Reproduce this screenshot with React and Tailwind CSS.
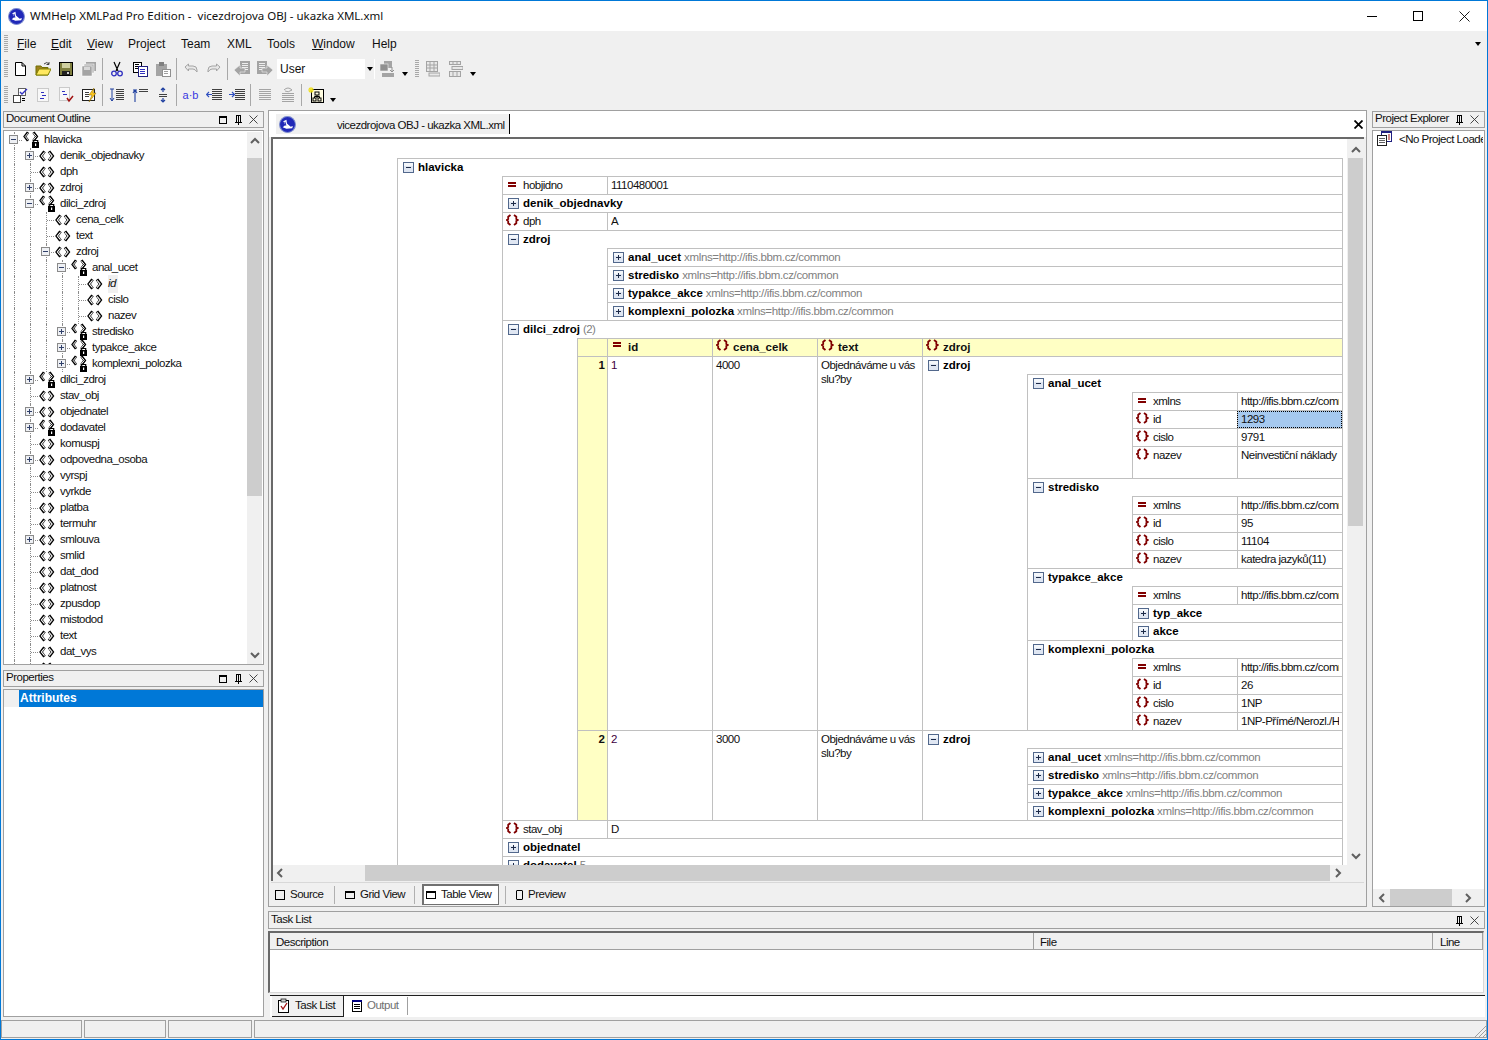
import React from "react";

const Svg = ({ children, w = 16, h = 16, crisp = false }) => (
  <svg width={w} height={h} viewBox={`0 0 ${w} ${h}`} shapeRendering={crisp ? "crispEdges" : undefined} className="shrink-0 block">
    {children}
  </svg>
);

const Logo = () => (
  <svg width="17" height="17" viewBox="0 0 16 16" className="shrink-0 block">
    <circle cx="8" cy="8" r="7.5" fill="#2028b8" stroke="#8090d0" strokeWidth="1" />
    <path d="M4 5 L7 3.5 L7.5 7 L11 10 L13 9.5 L12.5 11.5 L7 12 L3.5 10.5 L6 8.5 Z" fill="#fff" />
    <path d="M5.5 5.5 L6.5 9" stroke="#2028b8" strokeWidth="1" />
  </svg>
);

// dark red marks used in the table view
const Brace = () => (
  <Svg w={13} h={13}>
    <path d="M4.5 2 L2.2 3.8 L2.2 6 L0.8 7 L2.2 8 L2.2 10.2 L4.5 12" fill="none" stroke="#800000" strokeWidth="1.8" />
    <path d="M8 2 L10.3 3.8 L10.3 6 L11.7 7 L10.3 8 L10.3 10.2 L8 12" fill="none" stroke="#800000" strokeWidth="1.8" />
  </Svg>
);
const Equal = () => (
  <Svg w={13} h={13} crisp>
    <rect x="2" y="5" width="8" height="2" fill="#800000" />
    <rect x="2" y="8" width="8" height="2" fill="#800000" />
  </Svg>
);

const Expander = ({ open }) => (
  <svg width="11" height="11" viewBox="0 0 11 11" shapeRendering="crispEdges" className="shrink-0 block">
    <rect x="0.5" y="0.5" width="10" height="10" fill="#dfe6f2" stroke="#52688c" />
    <rect x="1" y="1" width="9" height="3" fill="#f4f7fb" />
    <rect x="3" y="5" width="5" height="1" fill="#1c2a48" />
    {!open && <rect x="5" y="3" width="1" height="5" fill="#1c2a48" />}
  </svg>
);

const Chev = ({ x, flip, y = 0, s = 11 }) => (
  <g transform={`translate(${x} ${y}) ${flip ? "translate(6.5 0) scale(-1 1)" : ""} scale(${s / 11})`}>
    <path d="M5 0.8 L1.5 5.5 L5 10.2" fill="none" stroke="#000" strokeWidth="3" />
    <path d="M5 1.8 L1.9 5.5 L5 9.2" fill="none" stroke="#fff" strokeWidth="1.1" />
  </g>
);

const TagIcon = ({ lock }) => (
  <svg width="18" height="18" viewBox="0 0 18 18" className="shrink-0 block -mt-[1px]">
    {lock ? (
      <>
        <Chev x={0.5} y={0.5} s={10} />
        <Chev x={8.5} y={0.5} s={10} flip />
        <rect x="9" y="11" width="7" height="6" fill="#000" />
        <path d="M10.3 11 V9.5 H14.7 V11" fill="none" stroke="#000" strokeWidth="1.2" />
        <rect x="12" y="12.5" width="1.2" height="2.5" fill="#fff" />
      </>
    ) : (
      <>
        <Chev x={0.5} y={3.5} />
        <Chev x={8.5} y={3.5} flip />
      </>
    )}
  </svg>
);

const TreeBox = ({ open }) => (
  <svg width="9" height="9" viewBox="0 0 9 9" shapeRendering="crispEdges" className="block bg-white">
    <rect x="0.5" y="0.5" width="8" height="8" fill="#eef0f4" stroke="#8a8a8a" />
    <rect x="2" y="4" width="5" height="1" fill="#30406a" />
    {!open && <rect x="4" y="2" width="1" height="5" fill="#30406a" />}
  </svg>
);

const Guide = () => (
  <div className="w-[16px] h-full shrink-0 pl-[8px]">
    <div className="h-full border-l border-dotted border-[#8c8c8c]" />
  </div>
);

const TreeRow = ({ d, name, exp, lock, em }) => (
  <div className="flex h-[16px] items-center">
    {Array.from({ length: d }).map((_, i) => (
      <Guide key={i} />
    ))}
    <div className="relative w-[16px] h-full shrink-0 pl-[8px] flex items-center">
      <div className="h-full border-l border-dotted border-[#8c8c8c]" />
      <div className="w-[8px] border-t border-dotted border-[#8c8c8c]" />
      {exp && (
        <div className="absolute left-[3px] top-[3px]">
          <TreeBox open={exp === "-"} />
        </div>
      )}
    </div>
    <div className="w-[22px] shrink-0 pl-[1px]">
      <TagIcon lock={lock} />
    </div>
    <span className={em ? "italic bg-[#f0f0f0] pr-[2px]" : ""}>{name}</span>
  </div>
);

const treeRows = [
  [0, "hlavicka", "-", 1],
  [1, "denik_objednavky", "+"],
  [1, "dph"],
  [1, "zdroj", "+"],
  [1, "dilci_zdroj", "-", 1],
  [2, "cena_celk"],
  [2, "text"],
  [2, "zdroj", "-"],
  [3, "anal_ucet", "-", 1],
  [4, "id", null, 0, 1],
  [4, "cislo"],
  [4, "nazev"],
  [3, "stredisko", "+", 1],
  [3, "typakce_akce", "+", 1],
  [3, "komplexni_polozka", "+", 1],
  [1, "dilci_zdroj", "+", 1],
  [1, "stav_obj"],
  [1, "objednatel", "+"],
  [1, "dodavatel", "+", 1],
  [1, "komuspj"],
  [1, "odpovedna_osoba", "+"],
  [1, "vyrspj"],
  [1, "vyrkde"],
  [1, "platba"],
  [1, "termuhr"],
  [1, "smlouva", "+"],
  [1, "smlid"],
  [1, "dat_dod"],
  [1, "platnost"],
  [1, "zpusdop"],
  [1, "mistodod"],
  [1, "text"],
  [1, "dat_vys"],
  [1, ""],
];

const ChevIcon = ({ dir }) => {
  const d = {
    up: "M2 8 L6 4 L10 8",
    down: "M2 4 L6 8 L10 4",
    left: "M8 2 L4 6 L8 10",
    right: "M4 2 L8 6 L4 10",
  }[dir];
  return (
    <svg width="12" height="12" viewBox="0 0 12 12" className="block">
      <path d={d} fill="none" stroke="#606060" strokeWidth="2" />
    </svg>
  );
};

const BoxBtn = () => <div className="w-[8px] h-[8px] border border-black border-t-2" />;
const Pin = () => (
  <svg width="9" height="11" viewBox="0 0 9 11" shapeRendering="crispEdges" className="block">
    <path d="M1 8 H8 M2.5 1 H6.5 V8 H2.5 Z M4 1 V8" fill="none" stroke="#000" />
    <path d="M4.5 8 V11" stroke="#000" />
  </svg>
);
const Cross = ({ bold }) => (
  <svg width="9" height="9" viewBox="0 0 9 9" className="block">
    <path d="M0.5 0.5 L8.5 8.5 M8.5 0.5 L0.5 8.5" stroke={bold ? "#000" : "#333"} strokeWidth={bold ? 1.8 : 0.9} />
  </svg>
);

const PanelHead = ({ title, box, className = "" }) => (
  <div className={`flex h-[17px] items-center border border-[#a0a0a0] bg-[#f0f0f0] pl-[2px] pr-[5px] ${className}`}>
    <span className="flex-1 whitespace-nowrap overflow-hidden pb-[1px]">{title}</span>
    {box && <div className="mr-[7px]"><BoxBtn /></div>}
    <div className="mr-[6px]"><Pin /></div>
    <Cross />
  </div>
);

// table view ----------------------------------------------------------
const Head = ({ name, open, meta, count, className = "" }) => (
  <div className={`flex h-[17px] items-center pl-[5px] whitespace-nowrap ${className}`}>
    <Expander open={open} />
    <span className="ml-[4px] font-bold text-black tracking-normal">{name}</span>
    {meta && <span className="ml-[3px] text-[#808080] tracking-[-0.35px]">{meta}</span>}
    {count && <span className="ml-[3px] text-[#808080]">{count}</span>}
  </div>
);

const Block = ({ name, open, meta, count, children }) => (
  <div className="border-t border-l border-[#c0c0c0]">
    <Head name={name} open={open} meta={meta} count={count} />
    {children && <div className="ml-[104px]">{children}</div>}
  </div>
);

const Field = ({ kind, name, value, sel, h = "h-[18px]" }) => (
  <div className={`flex border-t border-l border-[#c0c0c0] ${h}`}>
    <div className="flex w-[104px] shrink-0 pl-[3px]">
      <div className="w-[17px] shrink-0">{kind === "a" ? <Equal /> : <Brace />}</div>
      <span className="leading-[16px] whitespace-nowrap">{name}</span>
    </div>
    <div className={`flex-1 min-w-0 border-l border-[#c0c0c0] ${sel ? "bg-[#a6c9ef] outline-1 outline-dotted -outline-offset-1 outline-black" : ""} pl-[3px] pr-[3px]`}>
      <div className="overflow-hidden whitespace-nowrap leading-[16px]">{value}</div>
    </div>
  </div>
);

const URL = "http://ifis.bbm.cz/common";
const NS = "xmlns=http://ifis.bbm.cz/common";

const Col = ({ children, className = "" }) => (
  <div className={`w-[105px] shrink-0 border-l border-[#c0c0c0] pl-[3px] pt-[1px] leading-[14px] ${className}`}>{children}</div>
);

const ColHead = ({ kind, children, className = "" }) => (
  <div className={`flex shrink-0 border-l border-[#c0c0c0] pl-[3px] font-bold tracking-normal items-start ${className}`}>
    <div className="w-[17px] shrink-0">
      {kind === "a" ? <div className="-mt-[2px]"><Equal /></div> : <div className="-mt-[1px]"><Brace /></div>}
    </div>
    <span className="leading-[17px]">{children}</span>
  </div>
);

const NumCell = ({ n }) => (
  <div className="w-[30px] shrink-0 border-l border-[#c0c0c0] bg-[#ffffc4] text-right pr-[2px] font-bold tracking-normal leading-[16px]">{n}</div>
);

const TableView = () => (
  <div className="w-[946px] h-full overflow-hidden">
    <div className="border-r border-[#c0c0c0] text-[#101010]">
      <Block name="hlavicka" open>
        <Field kind="a" name="hobjidno" value="1110480001" />
        <Block name="denik_objednavky" />
        <Field kind="e" name="dph" value="A" />
        <Block name="zdroj" open>
          <Block name="anal_ucet" meta={NS} />
          <Block name="stredisko" meta={NS} />
          <Block name="typakce_akce" meta={NS} />
          <Block name="komplexni_polozka" meta={NS} />
        </Block>
        <div className="border-t border-l border-[#c0c0c0]">
          <Head name="dilci_zdroj" open count="(2)" />
          <div className="ml-[74px]">
            <div className="flex h-[18px] border-t border-l border-[#c0c0c0] bg-[#ffffc4]">
              <div className="w-[29px] shrink-0" />
              <ColHead kind="a" className="w-[105px]">id</ColHead>
              <ColHead kind="e" className="w-[105px]">cena_celk</ColHead>
              <ColHead kind="e" className="w-[105px]">text</ColHead>
              <ColHead kind="e" className="flex-1">zdroj</ColHead>
            </div>
            <div className="flex h-[374px] border-t border-[#c0c0c0]">
              <NumCell n="1" />
              <Col className="text-[#400040]">1</Col>
              <Col>4000</Col>
              <Col>Objednáváme u vás slu?by</Col>
              <div className="flex-1 min-w-0 border-l border-[#c0c0c0]">
                <Head name="zdroj" open />
                <div className="ml-[104px]">
                  <Block name="anal_ucet" open>
                    <Field kind="a" name="xmlns" value={URL} />
                    <Field kind="e" name="id" value="1293" sel />
                    <Field kind="e" name="cislo" value="9791" />
                    <Field kind="e" name="nazev" value="Neinvestiční náklady" h="h-[32px]" />
                  </Block>
                  <Block name="stredisko" open>
                    <Field kind="a" name="xmlns" value={URL} />
                    <Field kind="e" name="id" value="95" />
                    <Field kind="e" name="cislo" value="11104" />
                    <Field kind="e" name="nazev" value="katedra jazyků(11)" />
                  </Block>
                  <Block name="typakce_akce" open>
                    <Field kind="a" name="xmlns" value={URL} />
                    <Block name="typ_akce" />
                    <Block name="akce" />
                  </Block>
                  <Block name="komplexni_polozka" open>
                    <Field kind="a" name="xmlns" value={URL} />
                    <Field kind="e" name="id" value="26" />
                    <Field kind="e" name="cislo" value="1NP" />
                    <Field kind="e" name="nazev" value="1NP-Přímé/Nerozl./Hodnota" />
                  </Block>
                </div>
              </div>
            </div>
            <div className="flex h-[90px] border-t border-[#c0c0c0]">
              <NumCell n="2" />
              <Col className="text-[#400040]">2</Col>
              <Col>3000</Col>
              <Col>Objednáváme u vás slu?by</Col>
              <div className="flex-1 min-w-0 border-l border-[#c0c0c0]">
                <Head name="zdroj" open />
                <div className="ml-[104px]">
                  <Block name="anal_ucet" meta={NS} />
                  <Block name="stredisko" meta={NS} />
                  <Block name="typakce_akce" meta={NS} />
                  <Block name="komplexni_polozka" meta={NS} />
                </div>
              </div>
            </div>
          </div>
        </div>
        <Field kind="e" name="stav_obj" value="D" />
        <Block name="objednatel" />
        <Block name="dodavatel" meta="5" />
      </Block>
    </div>
  </div>
);

// toolbars ------------------------------------------------------------
const Lines = ({ x, y, n = 3, w = 7, c = "#000", gap = 2 }) =>
  Array.from({ length: n }).map((_, i) => <rect key={i} x={x} y={y + i * gap} width={w} height="1" fill={c} />);

const Page = ({ x = 2, y = 1, w = 11, h = 14, s = "#000", f = "#fff" }) => (
  <rect x={x + 0.5} y={y + 0.5} width={w} height={h} fill={f} stroke={s} />
);

const GR = "#a4a4a4";
const BL = "#3030c0";

const icons = {
  new: <path d="M3.5 1.5 H10 L13.5 5 V14.5 H3.5 Z M10 1.5 V5 H13.5" fill="#fff" stroke="#000" />,
  open: (
    <>
      <path d="M1 5 H6 L7 6.5 H13 V14 H1 Z" fill="#a08020" stroke="#707000" />
      <path d="M1 14 L4 8 H16 L13 14 Z" fill="#ffe860" stroke="#808000" />
      <path d="M9 3 Q12 0 14 3 M14 1 V3.5 H11.5" fill="none" stroke="#404040" />
    </>
  ),
  save: (
    <>
      <rect x="1.5" y="1.5" width="13" height="13" fill="#808040" stroke="#000" />
      <rect x="4" y="2" width="8" height="5" fill="#d0d0a0" />
      <rect x="4" y="10" width="8" height="4" fill="#202020" />
      <rect x="9" y="11" width="2" height="2" fill="#d0d0d0" />
    </>
  ),
  saveall: (
    <>
      <rect x="5" y="1" width="10" height="9" fill={GR} />
      <rect x="3" y="3" width="10" height="9" fill="#b8b8b8" stroke="#fff" strokeWidth="0.5" />
      <rect x="1" y="5" width="10" height="10" fill={GR} stroke="#fff" strokeWidth="0.5" />
      <rect x="3" y="6" width="6" height="3" fill="#d8d8d8" />
    </>
  ),
  cut: (
    <>
      <path d="M5 1 L9 10 M11 1 L7 10" stroke="#000" strokeWidth="1.2" />
      <circle cx="5" cy="12.5" r="2.3" fill="none" stroke={BL} strokeWidth="1.3" />
      <circle cx="11" cy="12.5" r="2.3" fill="none" stroke={BL} strokeWidth="1.3" />
    </>
  ),
  copy: (
    <>
      <Page x={1} y={1} w={8} h={10} />
      <Lines x={3} y={3} n={3} w={4} c="#000" />
      <Page x={6} y={5} w={9} h={10} s="#202080" />
      <Lines x={8} y={8} n={3} w={5} c={BL} />
    </>
  ),
  paste: (
    <>
      <rect x="1" y="3" width="11" height="12" fill={GR} />
      <rect x="4" y="1" width="5" height="4" fill="#808080" />
      <Page x={7} y={8} w={8} h={7} s="#909090" />
      <Lines x={9} y={10} n={2} w={4} c="#a0a0a0" />
    </>
  ),
  undo: <path d="M2 6 L5.5 3 V5 H10 Q14 5 14 9 V11 Q12 8 10 8 H5.5 V10 Z" fill="#e8e8e8" stroke={GR} />,
  redo: <path d="M14 6 L10.5 3 V5 H6 Q2 5 2 9 V11 Q4 8 6 8 H10.5 V10 Z" fill="#e8e8e8" stroke={GR} />,
  back: (
    <>
      <rect x="6" y="0" width="10" height="13" fill={GR} />
      <Lines x={8} y={2} n={4} w={6} c="#eee" />
      <path d="M0 9 L6 4 V7 H11 V11 H6 V15 Z" fill={GR} stroke="#f0f0f0" strokeWidth="0.6" />
    </>
  ),
  forward: (
    <>
      <rect x="0" y="0" width="10" height="13" fill={GR} />
      <Lines x={2} y={2} n={4} w={6} c="#eee" />
      <path d="M16 9 L10 4 V7 H5 V11 H10 V15 Z" fill={GR} stroke="#f0f0f0" strokeWidth="0.6" />
    </>
  ),
  xform: (
    <>
      <rect x="5" y="0" width="8" height="7" fill={GR} />
      <rect x="1" y="3" width="8" height="7" fill="#909090" stroke="#f0f0f0" strokeWidth="0.6" />
      <rect x="3" y="12" width="12" height="4" fill={GR} />
      <path d="M13 6 V11 M11 9 L13 11 L15 9" fill="none" stroke="#909090" />
    </>
  ),
  grid1: (
    <>
      <rect x="2.5" y="0.5" width="11" height="10" fill="#e8e8e8" stroke={GR} />
      <path d="M6 1 V10 M10 1 V10 M3 4 H13 M3 7 H13" stroke={GR} />
      <rect x="5" y="12" width="11" height="3" fill="#e8e8e8" stroke={GR} />
    </>
  ),
  grid2: (
    <>
      <rect x="2.5" y="0.5" width="11" height="3" fill="#e8e8e8" stroke={GR} />
      <rect x="5" y="5.5" width="11" height="3" fill="#e8e8e8" stroke={GR} />
      <rect x="2.5" y="10.5" width="11" height="5" fill="#e8e8e8" stroke={GR} />
      <path d="M6 1 V3 M10 1 V3 M6 11 V15 M10 11 V15" stroke={GR} />
    </>
  ),
  checks: (
    <>
      <Page x={6} y={1} w={7} h={7} s="#606060" />
      <path d="M8 5 L10 7 L15 2" fill="none" stroke={BL} strokeWidth="1.4" />
      <Page x={1} y={8} w={7} h={7} s="#404040" />
      <Lines x={10} y={11} n={2} w={3} c="#000" />
    </>
  ),
  doc: (
    <>
      <rect x="2.5" y="1.5" width="11" height="13" fill="#f8f8f8" stroke="#a0a0a0" strokeDasharray="1 1" />
      <Lines x={6} y={5} n={1} w={3} c={BL} />
      <Lines x={7} y={8} n={1} w={4} c={BL} />
      <Lines x={5} y={11} n={1} w={4} c={BL} />
    </>
  ),
  docok: (
    <>
      <rect x="1.5" y="0.5" width="10" height="13" fill="#f8f8f8" stroke="#a0a0a0" strokeDasharray="1 1" />
      <Lines x={4} y={4} n={1} w={3} c={BL} />
      <Lines x={5} y={7} n={1} w={4} c={BL} />
      <path d="M9 11 L11 14 L15 9" fill="none" stroke="#a01010" strokeWidth="1.5" />
    </>
  ),
  bolt: (
    <>
      <rect x="1.5" y="2.5" width="12" height="11" fill="#fff" stroke="#202020" strokeWidth="1" />
      <Lines x={4} y={5} n={3} w={4} c="#404040" />
      <path d="M13 1 L8 8 H11 L8 15 L15 6 H12 Z" fill="#ffc820" stroke="#806000" strokeWidth="0.5" />
    </>
  ),
  down: (
    <>
      <path d="M3 2 V14 M1 2 H5 M1 11 L3 14 L5 11" fill="none" stroke="#2040a0" />
      <Lines x={7} y={2} n={6} w={8} c="#404040" />
    </>
  ),
  up: (
    <>
      <path d="M3 15 V3 M1 3 H5 M1 6 L3 3 L5 6" fill="none" stroke="#2040a0" strokeWidth="1.1" />
      <Lines x={7} y={2} n={2} w={9} c="#404040" />
    </>
  ),
  updown: (
    <>
      <path d="M8 1 V5 M6 3 L8 1 L10 3 M8 15 V11 M6 13 L8 15 L10 13" fill="none" stroke="#2040a0" strokeWidth="1.2" />
      <Lines x={4} y={7} n={2} w={8} c="#404040" />
    </>
  ),
  left: (
    <>
      <path d="M6 7.5 H1 M3 5 L0.5 7.5 L3 10" fill="none" stroke="#3050c0" strokeWidth="1.2" />
      <Lines x={6} y={2} n={6} w={10} c="#404040" />
    </>
  ),
  right: (
    <>
      <path d="M0 7.5 H5 M3 5 L5.5 7.5 L3 10" fill="none" stroke="#3050c0" strokeWidth="1.2" />
      <Lines x={6} y={2} n={6} w={10} c="#404040" />
    </>
  ),
  glines: <Lines x={2} y={2} n={6} w={12} c={GR} />,
  gcurl: (
    <>
      <path d="M4 3 Q8 -1 12 3 Q8 6 5 4" fill="none" stroke={GR} />
      <Lines x={2} y={6} n={5} w={12} c={GR} />
    </>
  ),
  tree: (
    <>
      <rect x="3.5" y="2.5" width="12" height="13" fill="#fffce0" stroke="#000" />
      <rect x="7" y="5" width="4" height="3" fill="none" stroke="#000" />
      <rect x="5" y="11" width="3" height="3" fill="none" stroke="#000" />
      <rect x="10" y="11" width="3" height="3" fill="none" stroke="#000" />
      <path d="M9 8 V11 M6.5 11 V9.5 H11.5 V11" fill="none" stroke="#000" />
      <path d="M3 0 V6 M0 3 H6 M1 1 L5 5 M5 1 L1 5" stroke="#f0e020" strokeWidth="1.1" />
    </>
  ),
};

const Tool = ({ name }) => (
  <div className="w-[23px] h-full shrink-0 flex items-center justify-center">
    <Svg>{icons[name]}</Svg>
  </div>
);
const Sep = () => <div className="w-[1px] h-[22px] mx-[2px] bg-[#a8a8a8] shrink-0" />;
const Grip = ({ className = "" }) => (
  <div className={`w-[4px] h-[18px] shrink-0 bg-[repeating-linear-gradient(to_bottom,#a8a8a8_0,#a8a8a8_1px,transparent_1px,transparent_2px)] ${className}`} />
);
const Arrow = ({ className = "" }) => (
  <div className={`w-0 h-0 border-x-[3px] border-t-[4px] border-x-transparent border-t-black shrink-0 ${className}`} />
);

const MenuItem = ({ k, rest, className }) => (
  <span className={className}>
    {k && <span className="underline">{k}</span>}
    {rest}
  </span>
);

const ViewTab = ({ icon, label, className = "" }) => (
  <div className={`flex items-center gap-[5px] h-[20px] whitespace-nowrap ${className}`}>
    {icon}
    <span>{label}</span>
  </div>
);
const Win = () => <div className="w-[10px] h-[8px] border border-black border-t-2 shrink-0" />;

const ColCell = ({ className = "", children }) => (
  <div className={`border-r border-[#a0a0a0] pl-[4px] leading-[18px] shrink-0 ${className}`}>{children}</div>
);

const Cell = ({ className = "" }) => <div className={`border border-[#a0a0a0] h-[18px] shrink-0 ${className}`} />;

export default function App() {
  return (
    <div className="w-[1488px] h-[1040px] flex flex-col border border-[#0078d7] bg-[#f0f0f0] overflow-hidden text-[11.5px] tracking-[-0.5px] text-[#101010] font-['Liberation_Sans',sans-serif]">
      {/* title bar */}
      <div className="h-[30px] shrink-0 bg-white flex items-center pl-[7px] pr-[17px] tracking-normal">
        <Logo />
        <span className="ml-[5px] font-['Noto_Sans',sans-serif] text-[11.5px] whitespace-pre">WMHelp XMLPad Pro Edition -  vicezdrojova OBJ - ukazka XML.xml</span>
        <div className="flex-1" />
        <div className="w-[10px] h-[1px] bg-black" />
        <div className="ml-[36px] w-[10px] h-[10px] border border-black" />
        <div className="ml-[36px]">
          <svg width="11" height="11" viewBox="0 0 11 11" className="block"><path d="M0.5 0.5 L10.5 10.5 M10.5 0.5 L0.5 10.5" stroke="#000" strokeWidth="0.9" /></svg>
        </div>
      </div>
      {/* menu */}
      <div className="h-[25px] shrink-0 flex items-center pl-[3px] pr-[6px] text-[12px] tracking-normal">
        <Grip />
        <MenuItem k="F" rest="ile" className="ml-[9px] w-[34px]" />
        <MenuItem k="E" rest="dit" className="w-[36px]" />
        <MenuItem k="V" rest="iew" className="w-[41px]" />
        <MenuItem rest="Project" className="w-[53px]" />
        <MenuItem rest="Team" className="w-[46px]" />
        <MenuItem rest="XML" className="w-[40px]" />
        <MenuItem rest="Tools" className="w-[45px]" />
        <MenuItem k="W" rest="indow" className="w-[60px]" />
        <MenuItem rest="Help" />
        <div className="flex-1" />
        <Arrow />
      </div>
      {/* toolbar 1 */}
      <div className="h-[26px] shrink-0 flex items-center pl-[3px]">
        <Grip />
        <Tool name="new" /><Tool name="open" /><Tool name="save" /><Tool name="saveall" />
        <Sep />
        <Tool name="cut" /><Tool name="copy" /><Tool name="paste" />
        <Sep />
        <Tool name="undo" /><Tool name="redo" />
        <Sep />
        <Tool name="back" /><Tool name="forward" />
        <div className="ml-[1px] w-[98px] h-[20px] bg-white flex items-center pl-[3px] shrink-0 border-r border-white">
          <span className="flex-1 text-[12px] tracking-normal">User</span>
          <div className="w-[9px] h-full bg-[#f0f0f0] flex items-center justify-center"><Arrow /></div>
        </div>
        <Tool name="xform" />
        <Arrow className="ml-[4px] mt-[10px]" />
        <Grip className="ml-[7px] mr-[1px]" />
        <Tool name="grid1" /><Tool name="grid2" />
        <Arrow className="ml-[4px] mt-[10px]" />
      </div>
      {/* toolbar 2 */}
      <div className="h-[26px] shrink-0 flex items-center pl-[3px]">
        <Grip />
        <Tool name="checks" /><Tool name="doc" /><Tool name="docok" /><Tool name="bolt" />
        <Sep />
        <Tool name="down" /><Tool name="up" /><Tool name="updown" />
        <Sep />
        <div className="w-[23px] h-full shrink-0 flex items-center justify-center text-[11px] text-[#3838e0] tracking-normal whitespace-nowrap">a·b</div>
        <Tool name="left" /><Tool name="right" />
        <Sep />
        <Tool name="glines" /><Tool name="gcurl" />
        <Sep />
        <Tool name="tree" />
        <Arrow className="ml-[3px] mt-[10px]" />
      </div>

      {/* main area */}
      <div className="flex-1 min-h-0 flex pt-[2px]">
        {/* left docks */}
        <div className="w-[263px] shrink-0 pl-[2px] flex flex-col">
          <PanelHead title="Document Outline" box className="mt-[1px]" />
          <div className="mt-[2px] h-[535px] shrink-0 flex bg-white border border-[#a0a0a0] overflow-hidden">
            <div className="flex-1 min-w-0 pl-[2px] pt-[1px] overflow-hidden">
              {treeRows.map(([d, name, exp, lock, em], i) => (
                <TreeRow key={i} d={d} name={name} exp={exp} lock={lock} em={em} />
              ))}
            </div>
            <div className="w-[15px] shrink-0 mr-[1px] mt-[1px] flex flex-col bg-[#f0f0f0]">
              <div className="h-[26px] flex items-start justify-center pt-[3px]"><ChevIcon dir="up" /></div>
              <div className="h-[338px] bg-[#cdcdcd]" />
              <div className="flex-1 flex items-end justify-center pb-[3px]"><ChevIcon dir="down" /></div>
            </div>
          </div>
          <PanelHead title="Properties" box className="mt-[5px]" />
          <div className="mt-[2px] flex-1 mb-[2px] bg-white border border-[#a0a0a0]">
            <div className="flex h-[17px] bg-[#f0f0f0]">
              <div className="w-[15px] shrink-0" />
              <div className="flex-1 bg-[#0078d7] text-white font-bold leading-[16px] pl-[1px] tracking-normal text-[12px]">Attributes</div>
            </div>
          </div>
        </div>

        {/* center and right */}
        <div className="ml-[4px] w-[1217px] shrink-0 flex flex-col">
          <div className="h-[797px] shrink-0 flex">
            <div className="w-[1099px] shrink-0 flex flex-col border border-[#a0a0a0]">
              {/* document tab strip */}
              <div className="h-[26px] shrink-0 bg-white flex items-center pl-[7px] pr-[3px]">
                <div className="w-[234px] h-[20px] bg-[#f0f0f0] flex items-center pl-[3px] border-r border-black shrink-0">
                  <Logo />
                  <span className="ml-[41px] mt-[3px] whitespace-nowrap">vicezdrojova OBJ - ukazka XML.xml</span>
                </div>
                <div className="flex-1" />
                <Cross bold />
              </div>
              <div className="flex-1 min-h-0 ml-[2px] mr-[2px] flex flex-col">
                <div className="flex-1 min-h-0 flex border-l-2 border-t-2 border-[#696969]">
                  <div className="flex-1 min-w-0 bg-white pl-[124px] pt-[19px] overflow-hidden">
                    <TableView />
                  </div>
                  <div className="w-[17px] shrink-0 flex flex-col bg-[#f0f0f0]">
                    <div className="h-[17px] flex items-center justify-center mt-[2px]"><ChevIcon dir="up" /></div>
                    <div className="h-[368px] bg-[#cdcdcd] mx-[1px]" />
                    <div className="flex-1 flex items-end justify-center pb-[3px]"><ChevIcon dir="down" /></div>
                  </div>
                </div>
                <div className="h-[16px] shrink-0 flex bg-[#f0f0f0] border-l-2 border-[#696969]">
                  <div className="w-[92px] shrink-0 flex items-center pl-[1px]"><ChevIcon dir="left" /></div>
                  <div className="w-[965px] shrink-0 bg-[#cdcdcd]" />
                  <div className="w-[16px] shrink-0 flex items-center justify-center"><ChevIcon dir="right" /></div>
                </div>
                {/* view tabs */}
                <div className="h-[24px] shrink-0 mt-[1px] border-t border-[#d8d8d8] flex items-center">
                  <ViewTab className="ml-[4px] w-[59px]" label="Source" icon={<div className="w-[10px] h-[10px] border border-black shrink-0" />} />
                  <div className="w-[1px] h-[18px] bg-[#b0b0b0]" />
                  <ViewTab className="ml-[10px] w-[69px]" label="Grid View" icon={<Win />} />
                  <div className="w-[1px] h-[18px] bg-[#b0b0b0]" />
                  <ViewTab className="ml-[7px] w-[77px] bg-white border border-t-2 border-l-2 border-[#707070] pl-[2px] h-[21px]" label="Table View" icon={<Win />} />
                  <div className="ml-[6px] w-[1px] h-[18px] bg-[#b0b0b0]" />
                  <ViewTab className="ml-[9px]" label="Preview" icon={<div className="w-[7px] h-[10px] border border-black rounded-[1px] shrink-0 ml-[1px]" />} />
                </div>
              </div>
            </div>
            {/* project explorer */}
            <div className="ml-[5px] w-[113px] shrink-0 flex flex-col">
              <PanelHead title="Project Explorer" className="mt-[1px]" />
              <div className="mt-[2px] flex-1 min-h-0 bg-white border border-[#a0a0a0] flex flex-col">
                <div className="flex-1 min-h-0 overflow-hidden flex items-start pl-[3px] whitespace-nowrap pr-[1px]">
                  <Svg w={16} h={16}>
                    <rect x="5.5" y="0.5" width="10" height="10" fill="#fff" stroke="#202080" />
                    <rect x="5" y="0" width="11" height="2" fill="#202080" />
                    <rect x="1.5" y="4.5" width="9" height="10" fill="#fff" stroke="#202020" />
                    <Lines x={3} y={7} n={3} w={6} c="#606060" />
                    <path d="M12 4 H14 M12 6 H14 M12 8 H14" stroke="#a01010" />
                  </Svg>
                  <span className="ml-[7px] overflow-hidden">&lt;No Project Loaded&gt;</span>
                </div>
                <div className="h-[17px] shrink-0 flex bg-[#f0f0f0]">
                  <div className="w-[17px] flex items-center justify-center"><ChevIcon dir="left" /></div>
                  <div className="w-[62px] bg-[#cdcdcd]" />
                  <div className="flex-1 flex items-center justify-center"><ChevIcon dir="right" /></div>
                </div>
              </div>
            </div>
          </div>
          {/* task list */}
          <div className="mt-[4px] flex-1 min-h-0 flex flex-col">
            <PanelHead title="Task List" className="h-[18px]" />
            <div className="mt-[2px] h-[62px] shrink-0 bg-white border-t-2 border-l-2 border-r border-b border-t-[#696969] border-l-[#696969] border-[#d8d8d8] mr-[1px]">
              <div className="h-[17px] flex bg-[#f0f0f0] border-b border-[#a0a0a0]">
                <ColCell className="w-[764px] pl-[6px]">Description</ColCell>
                <ColCell className="w-[399px] pl-[6px]">File</ColCell>
                <ColCell className="flex-1 pl-[7px]">Line</ColCell>
              </div>
            </div>
            <div className="mt-[2px] h-[22px] shrink-0 bg-white border-t border-[#202020] flex ml-[2px] items-start">
              <div className="ml-[2px] h-[21px] w-[72px] shrink-0 bg-[#f0f0f0] border-r border-b border-[#202020] flex items-center pl-[5px] gap-[4px] -mt-[0px]">
                <Svg w={14} h={16}>
                  <rect x="1.5" y="2.5" width="10" height="12" fill="#fff" stroke="#000" />
                  <rect x="4" y="1" width="5" height="3" fill="#d0d0d0" stroke="#000" strokeWidth="0.7" />
                  <path d="M4 8 L6 11 L10 5" fill="none" stroke="#a01010" strokeWidth="1.3" />
                </Svg>
                <span className="whitespace-nowrap">Task List</span>
              </div>
              <div className="h-[18px] mt-[1px] flex items-center pl-[7px] pr-[8px] gap-[4px] border-r border-[#a0a0a0] text-[#707070]">
                <Svg w={12} h={14}>
                  <rect x="1.5" y="1.5" width="9" height="11" fill="#fff" stroke="#000" />
                  <rect x="1" y="1" width="10" height="2" fill="#000080" />
                  <Lines x={3} y={5} n={3} w={6} c="#000" />
                </Svg>
                <span>Output</span>
              </div>
            </div>
          </div>
        </div>
      </div>

      {/* status bar */}
      <div className="h-[20px] shrink-0 pt-[1px] flex items-start pl-[0px] gap-[2px] relative">
        <Cell className="w-[81px]" />
        <Cell className="w-[82px]" />
        <Cell className="w-[84px] " />
        <Cell className="flex-1" />
        <svg width="14" height="14" viewBox="0 0 14 14" className="absolute right-[0px] bottom-[1px]">
          <path d="M13 2 L2 13 M13 6 L6 13 M13 10 L10 13" stroke="#a0a0a0" strokeWidth="1" />
        </svg>
      </div>
    </div>
  );
}
